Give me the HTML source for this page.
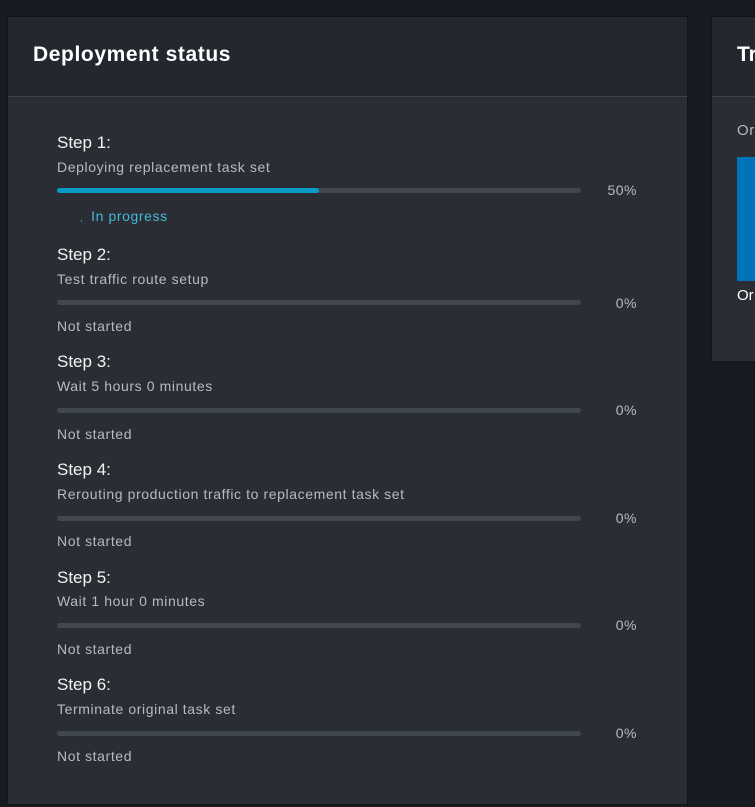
<!DOCTYPE html>
<html><head><style>
body{margin:0;width:755px;height:807px;background:#171a21;font-family:"Liberation Sans",sans-serif;position:relative;overflow:hidden}
.p{position:absolute;background:#2a2d33;border:1px solid #121419}
.h{position:absolute;left:0;right:0;top:0;height:79px;background:#232730;border-bottom:1px solid #3d424b}
.a{position:absolute;white-space:nowrap}
.t{font-size:17px;color:#f2f3f3}
.s{font-size:14px;color:#b4bcc3;letter-spacing:0.6px}
.bar{position:absolute;left:57px;width:524px;height:5px;border-radius:3px;background:#414750}
.pc{position:absolute;right:118px;font-size:14px;color:#b4bcc3;letter-spacing:0.5px}
</style></head><body>
<div class="p" style="left:7px;top:16px;width:679px;height:787px">
<div class="h"></div>
<div class="a" style="left:25px;top:26px;font-size:21px;font-weight:bold;color:#fff;letter-spacing:0.6px">Deployment status</div>
</div>
<div class="p" style="left:711px;top:16px;width:60px;height:344px">
<div class="h"></div>
<div class="a" style="left:25px;top:26px;font-size:21px;font-weight:bold;color:#fff">Tr</div>
<div class="a s" style="left:25px;top:105px;font-size:15px">Or</div>
<div style="position:absolute;left:25px;top:140px;width:40px;height:124px;background:#0073bb"></div>
<div class="a" style="left:25px;top:270px;font-size:15px;color:#fff">Or</div>
</div>

<div class="a t" style="left:57px;top:133px">Step 1:</div>
<div class="a s" style="left:57px;top:159px">Deploying replacement task set</div>
<div class="bar" style="top:188px"><div style="width:262px;height:5px;border-radius:3px;background:#0a9cc7"></div></div>
<div class="pc" style="top:182px">50%</div>
<div class="a" style="left:80px;top:208px;font-size:14px;color:#44b9d6;letter-spacing:0.6px"><span style="font-size:9px;margin-right:8px">,</span>In progress</div>

<div class="a t" style="left:57px;top:245px">Step 2:</div>
<div class="a s" style="left:57px;top:271px">Test traffic route setup</div>
<div class="bar" style="top:300px"></div><div class="pc" style="top:295px">0%</div>
<div class="a s" style="left:57px;top:318px">Not started</div>

<div class="a t" style="left:57px;top:352px">Step 3:</div>
<div class="a s" style="left:57px;top:378px">Wait 5 hours 0 minutes</div>
<div class="bar" style="top:408px"></div><div class="pc" style="top:402px">0%</div>
<div class="a s" style="left:57px;top:426px">Not started</div>

<div class="a t" style="left:57px;top:460px">Step 4:</div>
<div class="a s" style="left:57px;top:486px">Rerouting production traffic to replacement task set</div>
<div class="bar" style="top:516px"></div><div class="pc" style="top:510px">0%</div>
<div class="a s" style="left:57px;top:533px">Not started</div>

<div class="a t" style="left:57px;top:568px">Step 5:</div>
<div class="a s" style="left:57px;top:593px">Wait 1 hour 0 minutes</div>
<div class="bar" style="top:623px"></div><div class="pc" style="top:617px">0%</div>
<div class="a s" style="left:57px;top:641px">Not started</div>

<div class="a t" style="left:57px;top:675px">Step 6:</div>
<div class="a s" style="left:57px;top:701px">Terminate original task set</div>
<div class="bar" style="top:731px"></div><div class="pc" style="top:725px">0%</div>
<div class="a s" style="left:57px;top:748px">Not started</div>
</body></html>
